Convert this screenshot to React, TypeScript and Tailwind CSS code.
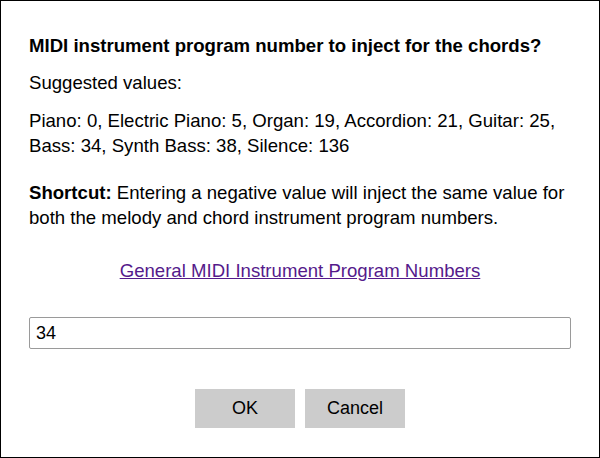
export default function App() {
  return (
    <div
      className="w-[600px] h-[458px] border border-black bg-white px-[28px] pt-[32px] text-[18.6px] leading-[25px] text-black"
      style={{ fontFamily: '"Liberation Sans", Arial, sans-serif' }}
    >
      <p className="font-bold">MIDI instrument program number to inject for the chords?</p>
      <p className="mt-[12px]">Suggested values:</p>
      <p className="mt-[13px]">
        Piano: 0, Electric Piano: 5, Organ: 19, Accordion: 21, Guitar: 25, Bass: 34, Synth Bass: 38, Silence: 136
      </p>
      <p className="mt-[22px]">
        <b>Shortcut:</b> Entering a negative value will inject the same value for both the melody and chord instrument
        program numbers.
      </p>
      <p className="mt-[28px] text-center">
        <a href="#" className="text-[#551a8b] underline">
          General MIDI Instrument Program Numbers
        </a>
      </p>
      <input
        className="mt-[34px] block w-full h-[32px] rounded-[2px] border border-[#9a9a9a] px-[6px] text-[18px] outline-none"
        defaultValue="34"
      />
      <div className="mt-[40px] flex justify-center gap-[10px]">
        <button className="w-[100px] h-[39px] bg-[#cccccc] text-[18px]">OK</button>
        <button className="w-[100px] h-[39px] bg-[#cccccc] text-[18px]">Cancel</button>
      </div>
    </div>
  )
}
